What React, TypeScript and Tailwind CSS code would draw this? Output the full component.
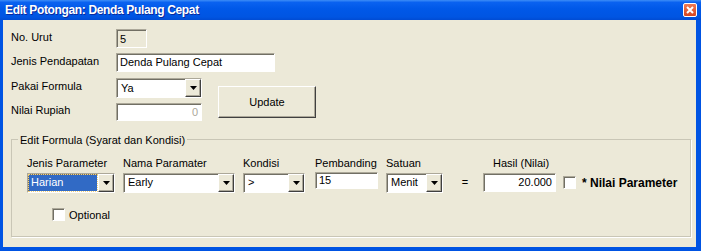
import type { ReactNode } from 'react';

// Windows XP style dialog: "Edit Potongan"

const sunken =
  'border border-[#ACA899] border-r-white border-b-white shadow-[inset_1px_1px_0_#716F64]';
const raised =
  'border border-white border-r-[#404040] border-b-[#404040] shadow-[inset_-1px_-1px_0_#ACA899] bg-[#ECE9D8]';

function Arrow() {
  return (
    <div className={`w-[16px] h-full flex items-center justify-center ${raised}`}>
      <svg width="7" height="4" viewBox="0 0 7 4">
        <polygon points="0,0 7,0 3.5,4" fill="#000" />
      </svg>
    </div>
  );
}

function Combo({
  value,
  className,
  selected,
}: {
  value: string;
  className: string;
  selected?: boolean;
}) {
  return (
    <div className={`flex bg-white ${sunken} ${className}`}>
      <div className="flex-1 flex items-stretch p-[1px] pl-[1px] min-w-0">
        {selected ? (
          <div className="flex-1 flex items-center pl-[2px] bg-[#316AC5] text-white outline outline-1 outline-dotted outline-[#F5D27A]">
            {value}
          </div>
        ) : (
          <div className="flex-1 flex items-center pl-[3px]">{value}</div>
        )}
      </div>
      <Arrow />
    </div>
  );
}

function TextBox({
  value,
  className,
  right,
}: {
  value: string;
  className: string;
  right?: boolean;
}) {
  return (
    <div
      className={`flex items-center ${right ? 'justify-end pr-[3px]' : 'pl-[3px]'} ${sunken} ${className}`}
    >
      {value}
    </div>
  );
}

function CheckBox() {
  return <div className={`w-[13px] h-[13px] bg-white ${sunken}`} />;
}

function Field({ label, children }: { label: string; children: ReactNode }) {
  return (
    <div className="flex items-center">
      <div className="w-[105px] pb-[3px]">{label}</div>
      {children}
    </div>
  );
}

function Col({
  label,
  className,
  children,
}: {
  label: string;
  className: string;
  children: ReactNode;
}) {
  return (
    <div className={`flex flex-col ${className}`}>
      <div className="h-[13px] leading-[13px] mb-[3px] whitespace-nowrap">{label}</div>
      {children}
    </div>
  );
}

export default function App() {
  return (
    <div className="w-[701px] h-[251px] flex flex-col bg-[#0054E3] overflow-hidden font-['Liberation_Sans',Arial,sans-serif] text-[11px] text-black">
      {/* Title bar */}
      <div className="h-[20px] flex items-center justify-between bg-[linear-gradient(to_bottom,#3D8DF7_0%,#0A62F0_12%,#0058E8_45%,#0055E2_85%,#004BD3_100%)]">
        <span className="ml-[5px] text-white font-bold text-[12px] tracking-[-0.35px] [text-shadow:1px_1px_0_#0A2A9C]">
          Edit Potongan: Denda Pulang Cepat
        </span>
        <div className="mr-[4px] w-[14px] h-[14px] rounded-[2px] border border-white bg-[linear-gradient(to_bottom,#EE7A55,#D8461F)] flex items-center justify-center">
          <svg width="8" height="8" viewBox="0 0 8 8">
            <path d="M1 1 L7 7 M7 1 L1 7" stroke="#fff" strokeWidth="2" />
          </svg>
        </div>
      </div>

      {/* Client area */}
      <div className="flex-1 ml-[3px] mr-[5px] mb-[4px] bg-[#ECE9D8] pl-[8px] pt-[9px]">
        <Field label="No. Urut">
          <TextBox value="5" className="w-[31px] h-[19px] bg-[#ECE9D8]" />
        </Field>
        <div className="mt-[4px]">
          <Field label="Jenis Pendapatan">
            <TextBox value="Denda Pulang Cepat" className="w-[159px] h-[19px] bg-white" />
          </Field>
        </div>
        <div className="flex mt-[6px]">
          <div>
            <Field label="Pakai Formula">
              <Combo value="Ya" className="w-[86px] h-[20px]" />
            </Field>
            <div className="mt-[4px]">
              <Field label="Nilai Rupiah">
                <TextBox value="0" right className="w-[86px] h-[18px] bg-white text-[#ACA899]" />
              </Field>
            </div>
          </div>
          <button
            className={`ml-[16px] mt-[8px] w-[98px] h-[32px] text-[11px] ${raised}`}
          >
            Update
          </button>
        </div>

        {/* Edit Formula group */}
        <fieldset className="mt-[11px] w-[680px] h-[104px] border border-[#C9C6B6] shadow-[1px_1px_0_#fff]">
          <legend className="ml-[6px] px-[2px] leading-[14px]">Edit Formula (Syarat dan Kondisi)</legend>
          <div className="pl-[15px] pt-[10px]">
            <div className="flex items-start">
              <Col label="Jenis Parameter" className="w-[88px]">
                <Combo value="Harian" selected className="w-[88px] h-[20px]" />
              </Col>
              <Col label="Nama Paramater" className="ml-[8px] w-[112px]">
                <Combo value="Early" className="w-[112px] h-[20px]" />
              </Col>
              <Col label="Kondisi" className="ml-[8px] w-[62px]">
                <Combo value=">" className="w-[62px] h-[20px]" />
              </Col>
              <Col label="Pembanding" className="ml-[10px] w-[63px]">
                <TextBox value="15" className="-mt-[1px] w-[63px] h-[17px] bg-white" />
              </Col>
              <Col label="Satuan" className="ml-[8px] w-[57px]">
                <Combo value="Menit" className="w-[57px] h-[20px]" />
              </Col>
              <Col label="" className="w-[40px]">
                <div className="h-[20px] flex items-center justify-center pl-[4px]">=</div>
              </Col>
              <Col label="Hasil (Nilai)" className="w-[73px] [&>div:first-child]:pl-[10px]">
                <TextBox value="20.000" right className="w-[73px] h-[19px] bg-white" />
              </Col>
              <div className="ml-[7px] mt-[17px] flex items-center">
                <CheckBox />
                <span className="ml-[6px] font-bold text-[12px]">* Nilai Parameter</span>
              </div>
            </div>
            <div className="flex items-center ml-[25px] mt-[14px]">
              <CheckBox />
              <span className="ml-[4px]">Optional</span>
            </div>
          </div>
        </fieldset>
      </div>
    </div>
  );
}
